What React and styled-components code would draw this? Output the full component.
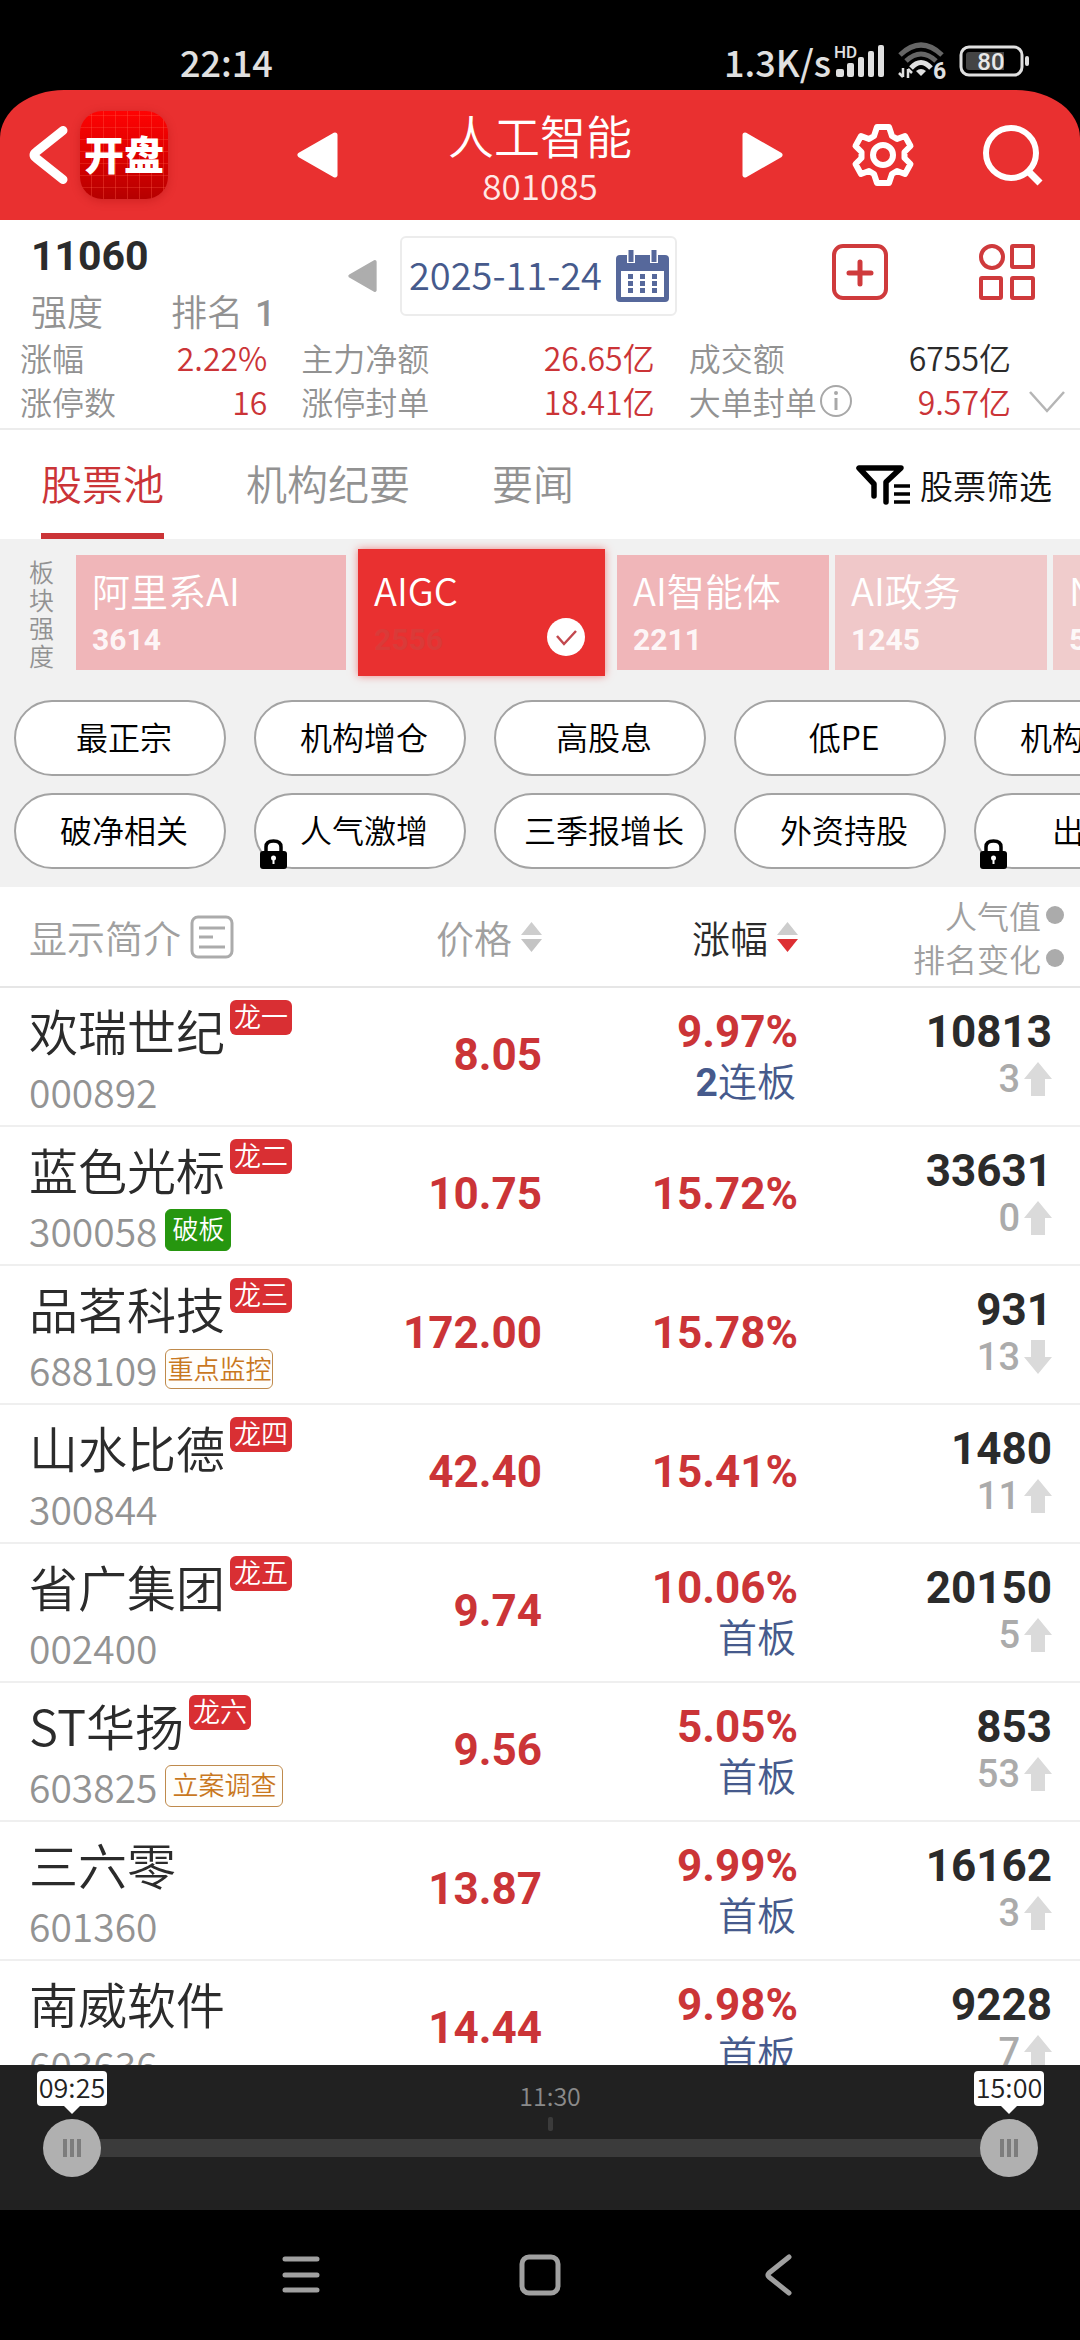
import React, { useState } from "react";
import styled, { createGlobalStyle, css } from "styled-components";

const cjk = `"Noto Sans CJK SC", sans-serif`;
const num = `Roboto, "Noto Sans CJK SC", sans-serif`;

const color = {
  brand: "#e93030",
  red: "#cb3437",
  ink: "#2b2b2b",
  gray: "#929292",
  light: "#a0a0a0",
  blue: "#465a8c",
  panel: "#f1f1f1",
};

const Global = createGlobalStyle`
  *, *::before, *::after { box-sizing: border-box; }
  html, body { margin: 0; background: #000; }
  body { font-family: ${cjk}; font-weight: 350; color: ${color.ink}; }
  button { font: inherit; color: inherit; background: none; border: 0; padding: 0; margin: 0; cursor: pointer; }
  svg { display: block; flex: none; overflow: visible; }
  dl, dd, h1, p { margin: 0; }
`;

const Screen = styled.div`
  display: flex;
  flex-direction: column;
  height: 100vh;
  overflow: hidden;
  background: #000;
  white-space: nowrap;
`;

/* Status bar */
const StatusBar = styled.div`
  display: flex;
  justify-content: space-between;
  align-items: center;
  flex: none;
  height: 90px;
  padding: 32px 51px 0 180px;
  font-size: 36px;
  font-weight: 500;
  line-height: 58px;
  color: #e0e0e0;
`;
const StatusIcons = styled.div`
  display: flex;
  align-items: center;
  gap: 13px;
`;
const Speed = styled.div`
  display: flex;
  align-items: center;
  gap: 4px;
`;

/* Header */
const Header = styled.header`
  display: grid;
  grid-template-columns: 1fr 486px 1fr;
  align-items: center;
  flex: none;
  height: 130px;
  background: ${color.brand};
  border-radius: 64px 64px 0 0 / 48px 48px 0 0;
  color: #fff;
`;
const HeaderLeft = styled.div`
  display: flex;
  align-items: center;
  gap: 12px;
  padding-left: 28px;
`;
const HeaderCenter = styled.div`
  display: flex;
  align-items: center;
  justify-content: space-between;
`;
const HeaderRight = styled.div`
  display: flex;
  align-items: center;
  justify-content: flex-end;
  gap: 68px;
  padding-right: 36px;
`;
const Logo = styled.div`
  display: flex;
  align-items: center;
  justify-content: center;
  width: 88px;
  height: 88px;
  padding-bottom: 4px;
  border-radius: 22px;
  background:
    repeating-linear-gradient(90deg, transparent 0 11px, rgba(255, 90, 70, 0.35) 11px 12px),
    repeating-linear-gradient(0deg, transparent 0 11px, rgba(255, 90, 70, 0.3) 11px 12px),
    linear-gradient(#ff0303, #de0000 50%, #b50000);
  box-shadow: 0 2px 10px rgba(150, 0, 0, 0.3);
  font-size: 40px;
  font-weight: 900;
  line-height: 48px;
`;
const Heading = styled.div`
  padding-top: 5px;
  text-align: center;
`;
const Title = styled.h1`
  font-size: 46px;
  font-weight: inherit;
  line-height: 54px;
`;
const Code = styled.p`
  font-size: 35px;
  line-height: 48px;
  color: #ffe9e6;
`;

/* Summary */
const Summary = styled.section`
  flex: none;
  padding-top: 16px;
  background: #fff;
  border-bottom: 2px solid #ececec;
`;
const SummaryTop = styled.div`
  display: flex;
  align-items: flex-start;
`;
const Score = styled.div`
  width: 348px;
  padding-left: 31px;
`;
const ScoreValue = styled.div`
  font-family: ${num};
  font-size: 41px;
  font-weight: 700;
  line-height: 40px;
`;
const ScoreMeta = styled.div`
  display: flex;
  gap: 68px;
  height: 40px;
  margin-top: 14px;
  font-size: 36px;
  line-height: 40px;
  color: ${color.gray};
`;
const Rank = styled.span`
  display: flex;
  align-items: baseline;
  gap: 12px;
  & > b {
    font-family: ${num};
    font-weight: 500;
  }
`;
const DateGroup = styled.div`
  display: flex;
  align-items: center;
  gap: 23px;
`;
const DateButton = styled.button`
  display: flex;
  align-items: center;
  justify-content: space-between;
  width: 277px;
  height: 80px;
  padding: 0 6px 0 7px;
  border: 2px solid #ececec;
  border-radius: 6px;
  color: ${color.blue};
  & > time {
    padding-bottom: 4px;
    font-size: 38px;
    line-height: 48px;
  }
`;
const Actions = styled.div`
  display: flex;
  gap: 91px;
  margin-left: auto;
  padding: 8px 45px 0 0;
`;
const StatsBar = styled.div`
  display: flex;
  align-items: flex-end;
  gap: 18px;
  padding: 5px 15px 5px 20px;
`;
const Stats = styled.div`
  display: grid;
  grid-template-columns: 247fr 353fr 322fr;
  gap: 34px;
  flex: 1;
`;
const StatRow = styled.div`
  display: flex;
  justify-content: space-between;
  font-size: 32px;
  line-height: 44px;
  & > dt {
    display: flex;
    align-items: center;
    gap: 2px;
    color: ${color.gray};
  }
  & > dd {
    color: ${(p) => (p.$plain ? color.ink : color.red)};
  }
`;
const MoreButton = styled.button`
  padding-bottom: 10px;
`;

/* Tabs */
const TabBar = styled.nav`
  display: flex;
  align-items: center;
  gap: 82px;
  flex: none;
  height: 109px;
  padding: 0 28px 0 41px;
  background: #fff;
`;
const Tab = styled.button`
  align-self: stretch;
  border-bottom: 6px solid ${(p) => (p.$active ? color.red : "transparent")};
  font-size: 41px;
  line-height: 48px;
  color: ${(p) => (p.$active ? color.red : color.gray)};
`;
const FilterButton = styled.button`
  display: flex;
  align-items: center;
  gap: 10px;
  margin-left: auto;
  font-size: 33px;
  line-height: 44px;
  color: #111;
`;

/* Sector cards and filter chips */
const Panel = styled.section`
  flex: none;
  padding: 10px 0 18px;
  background: ${color.panel};
  overflow: hidden;
`;
const SectorRow = styled.div`
  display: flex;
  align-items: center;
  gap: 6px;
  height: 127px;
`;
const SectorLabel = styled.div`
  flex: none;
  width: 70px;
  padding: 0 16px 0 29px;
  font-size: 25px;
  line-height: 28px;
  color: ${color.gray};
  white-space: normal;
  word-break: break-all;
`;
const SectorCard = styled.button`
  position: relative;
  flex: none;
  width: ${(p) => p.$width}px;
  height: 115px;
  padding: 0 16px;
  text-align: left;
  color: #fff;
  background: ${(p) => p.$tone};
  ${(p) =>
    p.$active &&
    css`
      height: 127px;
      margin: 0 6px;
      box-shadow: 0 0 8px rgba(233, 48, 48, 0.55);
    `}
`;
const SectorName = styled.span`
  display: block;
  font-size: 38px;
  line-height: 44px;
`;
const SectorValue = styled.span`
  display: block;
  margin-top: 10px;
  font-family: ${num};
  font-size: 30px;
  font-weight: 700;
  line-height: 36px;
  color: ${(p) => (p.$faded ? "#d93b39" : "rgba(255, 255, 255, 0.9)")};
`;
const CheckMark = styled.span`
  position: absolute;
  right: 20px;
  bottom: 20px;
`;
const ChipGrid = styled.div`
  display: grid;
  grid-template-columns: repeat(5, 212px);
  gap: 17px 28px;
  margin-top: 24px;
  padding-left: 14px;
`;
const Chip = styled.button`
  position: relative;
  height: 76px;
  padding: 0 0 4px 8px;
  border: 2px solid #a3a3a3;
  border-radius: 38px;
  background: #fff;
  font-size: 32px;
  line-height: 44px;
  color: #000;
`;
const LockBadge = styled.span`
  position: absolute;
  left: 4px;
  bottom: -2px;
`;

/* Stock table */
const ListArea = styled.main`
  flex: 1;
  min-height: 0;
  overflow: hidden;
  background: #fff;
`;
const Table = styled.table`
  width: 100%;
  table-layout: fixed;
  border-collapse: separate;
  border-spacing: 0;
`;
const Col = styled.col`
  width: ${(p) => p.$width};
`;
const Th = styled.th`
  height: 101px;
  padding: 0 ${(p) => p.$right || 0}px 0 ${(p) => p.$left || 0}px;
  border-bottom: 2px solid #e6e6e6;
  font-size: 38px;
  font-weight: inherit;
  line-height: 48px;
  color: ${(p) => (p.$active ? color.ink : color.light)};
`;
const HeadButton = styled.button`
  display: flex;
  align-items: center;
  gap: 9px;
  margin-left: ${(p) => (p.$end ? "auto" : 0)};
`;
const HeadLine = styled.button`
  display: flex;
  align-items: center;
  gap: 5px;
  margin-left: auto;
  font-size: 32px;
  line-height: 43px;
  &::after {
    content: "";
    width: 18px;
    height: 18px;
    border-radius: 9px;
    background: #ababab;
  }
`;
const Td = styled.td`
  height: 139px;
  padding: 0 0 4px;
  border-bottom: 2px solid #efefef;
  text-align: right;
  vertical-align: middle;
`;
const NameCell = styled(Td)`
  padding: 12px 0 0 29px;
  text-align: left;
  vertical-align: top;
`;
const LastCell = styled(Td)`
  padding-right: 28px;
`;
const NameLine = styled.div`
  display: flex;
  align-items: flex-start;
  gap: 5px;
  font-size: 49px;
  line-height: 60px;
`;
const Dragon = styled.span`
  height: 35px;
  padding: 0 4px;
  border-radius: 6px;
  background: #d92f33;
  font-size: 27px;
  line-height: 32px;
  color: #fff;
`;
const CodeLine = styled.div`
  display: flex;
  align-items: center;
  gap: 8px;
  height: 42px;
  margin-top: 10px;
  font-size: 39px;
  line-height: 42px;
  color: #939393;
`;
const Tag = styled.span`
  height: ${(p) => (p.$tight ? 40 : 42)}px;
  padding: 0 ${(p) => (p.$tight ? 1 : 6)}px;
  border: 1px solid ${(p) => (p.$solid ? "#26960f" : "#bf8a4c")};
  border-radius: 6px;
  background: ${(p) => (p.$solid ? "#26960f" : "#fffefb")};
  font-size: 26px;
  line-height: 36px;
  color: ${(p) => (p.$solid ? "#fff" : "#c9781f")};
`;
const Figure = styled.div`
  font-family: ${num};
  font-size: 44px;
  font-weight: 700;
  line-height: 48px;
  color: ${(p) => (p.$up ? color.red : color.ink)};
`;
const Boards = styled.div`
  display: flex;
  align-items: baseline;
  justify-content: flex-end;
  padding-right: 2px;
  height: 46px;
  font-size: 39px;
  line-height: 46px;
  color: ${color.blue};
  & > b {
    font-family: ${num};
    font-weight: 700;
  }
`;
const Move = styled.div`
  display: flex;
  align-items: center;
  justify-content: flex-end;
  gap: 4px;
  height: 46px;
  font-family: ${num};
  font-size: 38px;
  font-weight: 500;
  line-height: 46px;
  color: #ababab;
`;

/* Timeline */
const Timeline = styled.section`
  flex: none;
  height: 145px;
  padding: 54px 42px 0 43px;
  background: #212121;
`;
const Rail = styled.div`
  position: relative;
  display: grid;
  align-items: center;
  height: 58px;
  &::before {
    content: "";
    grid-area: 1 / 1;
    height: 18px;
    margin: 0 29px;
    background: #3b3b3b;
  }
`;
const thumb = css`
  width: 58px;
  height: 58px;
  border: 0;
  border-radius: 50%;
  background:
    linear-gradient(#7d7d7d, #7d7d7d) 20px 50% / 4px 18px no-repeat,
    linear-gradient(#7d7d7d, #7d7d7d) 27px 50% / 4px 18px no-repeat,
    linear-gradient(#7d7d7d, #7d7d7d) 34px 50% / 4px 18px no-repeat,
    #b0b0b0;
  pointer-events: auto;
`;
const Handle = styled.input`
  grid-area: 1 / 1;
  appearance: none;
  width: 100%;
  height: 58px;
  margin: 0;
  background: transparent;
  pointer-events: none;
  &::-webkit-slider-thumb {
    appearance: none;
    ${thumb}
  }
  &::-moz-range-thumb {
    ${thumb}
  }
`;
const Marks = styled.div`
  position: absolute;
  left: 29px;
  right: 29px;
  bottom: 100%;
`;
const Bubble = styled.label`
  position: absolute;
  bottom: 13px;
  width: 70px;
  height: 35px;
  margin-left: -35px;
  border-radius: 4px;
  background: #fff;
  font-size: 27px;
  line-height: 32px;
  text-align: center;
  color: #222;
  &::after {
    content: "";
    position: absolute;
    top: 100%;
    left: 27px;
    border: 8px solid transparent;
    border-top-color: #fff;
  }
`;
const Noon = styled.span`
  position: absolute;
  bottom: -12px;
  width: 70px;
  margin-left: -35px;
  font-size: 25px;
  line-height: 36px;
  text-align: center;
  color: #8a8a8a;
  &::after {
    content: "";
    display: block;
    width: 5px;
    height: 14px;
    margin: 4px auto 0;
    border-radius: 2px;
    background: #3b3b3b;
  }
`;

/* System navigation */
const SystemNav = styled.nav`
  display: flex;
  align-items: center;
  justify-content: center;
  gap: 198px;
  flex: none;
  height: 130px;
`;

const Triangle = ({ flip, w, h, fill }) => (
  <svg width={w} height={h} viewBox="0 0 41 46">
    <path
      d={flip ? "M3 3L38 23L3 43Z" : "M38 3L3 23L38 43Z"}
      fill={fill}
      stroke={fill}
      strokeWidth="5"
      strokeLinejoin="round"
    />
  </svg>
);

const BackIcon = () => (
  <svg width="40" height="60" viewBox="0 0 40 60" fill="none" stroke="#fff" strokeWidth="9" strokeLinecap="round" strokeLinejoin="round">
    <path d="M35 5.500L8 27Q4 30 8 33L35 54.500" />
  </svg>
);

const GearIcon = () => (
  <svg width="62" height="64" viewBox="0 0 62 64" fill="none" stroke="#fff" strokeWidth="6" strokeLinejoin="round">
    <path d="M25 4H37L40 13L45 16L53 13L58.500 23L52.500 29V35L58.500 41L53 51L45 48L40 51L37 60H25L22 51L17 48L9 51L3.500 41L9.500 35V29L3.500 23L9 13L17 16L22 13Z" />
    <circle cx="31" cy="32" r="10" />
  </svg>
);

const SearchIcon = () => (
  <svg width="62" height="62" viewBox="0 0 62 62" fill="none" stroke="#fff" strokeWidth="6">
    <circle cx="29" cy="29" r="25" />
    <path d="M46 47L58 59" strokeWidth="7" />
  </svg>
);

const SignalIcon = () => (
  <svg width="50" height="34" viewBox="0 0 50 34" fill="#e0e0e0">
    <text x="-1" y="14" fontFamily="Roboto, sans-serif" fontSize="17" fontWeight="500">HD</text>
    <rect x="1" y="25" width="8" height="8" rx="2" />
    <rect x="12" y="19" width="7" height="14" rx="2" />
    <rect x="23" y="13" width="6" height="20" rx="2" />
    <rect x="33" y="7" width="6" height="26" rx="2" />
    <rect x="43" y="1" width="6" height="32" rx="2" />
  </svg>
);

const WifiIcon = () => (
  <svg width="48" height="38" viewBox="0 0 48 38" fill="none" strokeWidth="5">
    <path d="M2 13Q23 -7 44 13" stroke="#666" />
    <path d="M8 19Q23 5 38 19" stroke="#666" />
    <path d="M13 26Q23 15 33 26" stroke="#e0e0e0" />
    <path d="M18 29Q23 25 28 29L23 34Z" fill="#e0e0e0" />
    <path d="M5 26V35M1 31L5 35M10 36V27M10 27L14 31" stroke="#e0e0e0" strokeWidth="2.500" />
    <text x="35" y="37" fill="#e0e0e0" fontFamily="Roboto, sans-serif" fontSize="23" fontWeight="700">6</text>
  </svg>
);

const BatteryIcon = () => (
  <svg width="70" height="32" viewBox="0 0 70 32">
    <rect x="2" y="2" width="61" height="28" rx="8" fill="none" stroke="#e0e0e0" strokeWidth="3" />
    <path d="M10 7H45V25H10Q7 25 7 22V10Q7 7 10 7Z" fill="#444" />
    <rect x="66" y="11" width="4" height="10" rx="2" fill="#e0e0e0" />
    <text x="32" y="25" textAnchor="middle" fill="#e8e8e8" fontFamily="Roboto, sans-serif" fontSize="24" fontWeight="500">80</text>
  </svg>
);

const CalendarIcon = () => (
  <svg width="53" height="52" viewBox="0 0 53 52">
    <path d="M4 5H49Q53 5 53 9V48Q53 52 49 52H4Q0 52 0 48V9Q0 5 4 5Z" fill="#56689b" />
    <rect x="5" y="21" width="43" height="26" fill="#fff" />
    <path d="M15 0V13M38 0V13" stroke="#fff" strokeWidth="8" />
    <path d="M15 0V12M38 0V12" stroke="#56689b" strokeWidth="5" />
    {[24, 31, 38].map((y) =>
      [12, 24, 36].map((x) => <rect key={`${x}-${y}`} x={x} y={y} width="5" height="5" fill="#56689b" />)
    )}
  </svg>
);

const AddIcon = () => (
  <svg width="56" height="56" viewBox="0 0 56 56" fill="none" stroke="#cf3a3c">
    <rect x="2" y="2" width="52" height="52" rx="9" strokeWidth="4" />
    <path d="M28 18V40M17 29H39" strokeWidth="5" strokeLinecap="round" />
  </svg>
);

const GridIcon = () => (
  <svg width="56" height="56" viewBox="0 0 56 56" fill="none" stroke="#cf3a3c" strokeWidth="4">
    <circle cx="13" cy="13" r="11" />
    <rect x="33" y="2" width="21" height="21" rx="1" />
    <rect x="2" y="34" width="20" height="20" rx="1" />
    <rect x="33" y="34" width="21" height="20" rx="1" />
  </svg>
);

const InfoIcon = () => (
  <svg width="34" height="34" viewBox="0 0 34 34" fill="none" stroke="#a8a8a8" strokeWidth="2">
    <circle cx="17" cy="17" r="15" />
    <path d="M17 14V26" strokeWidth="3" />
    <circle cx="17" cy="9" r="1" />
  </svg>
);

const FilterIcon = () => (
  <svg width="54" height="42" viewBox="0 0 54 42" fill="none" stroke="#000" strokeWidth="5.500" strokeLinecap="round" strokeLinejoin="round">
    <path d="M18 32V20L3 4H45L30 18V38" />
    <path d="M38 22H54M38 30H54M38 38H54" strokeWidth="3.500" strokeLinecap="butt" />
  </svg>
);

const LockIcon = () => (
  <svg width="27" height="30" viewBox="0 0 27 30">
    <path d="M6 14V8Q6 2 13.500 2Q21 2 21 8V14" fill="none" stroke="#000" strokeWidth="3.500" />
    <rect y="12" width="27" height="18" rx="3" />
    <circle cx="13.500" cy="19" r="2.500" fill="#fff" />
    <path d="M13.500 20V25" stroke="#fff" strokeWidth="2" />
  </svg>
);

const CheckIcon = () => (
  <svg width="38" height="38" viewBox="0 0 38 38">
    <circle cx="19" cy="19" r="19" fill="#fff" />
    <path d="M10 18L17 26L29 13" fill="none" stroke="#c2484e" strokeWidth="2.500" />
  </svg>
);

const NoteIcon = () => (
  <svg width="44" height="44" viewBox="0 0 44 44" fill="none" stroke="#ababab" strokeWidth="3">
    <rect x="2" y="2" width="40" height="40" rx="6" />
    <path d="M9 13H35M9 22H23M9 32H35" />
  </svg>
);

const SortIcon = ({ down }) => (
  <svg width="21" height="32" viewBox="0 0 21 32">
    <path d="M10.500 1L21 14H0Z" fill="#cdcdcd" />
    <path d="M0 18H21L10.500 31Z" fill={down ? "#dd2f33" : "#c4c4c4"} />
  </svg>
);

const ArrowIcon = ({ down }) => (
  <svg width="28" height="34" viewBox="0 0 28 34">
    <path d={down ? "M14 34L28 17H21V0H7V17H0Z" : "M14 0L28 17H21V34H7V17H0Z"} fill="#dadada" />
  </svg>
);

const stats = [
  [{ label: "涨幅", value: "2.22%" }, { label: "涨停数", value: "16" }],
  [{ label: "主力净额", value: "26.65亿" }, { label: "涨停封单", value: "18.41亿" }],
  [{ label: "成交额", value: "6755亿", plain: true }, { label: "大单封单", value: "9.57亿", info: true }],
];

const sectors = [
  { name: "阿里系AI", value: "3614", width: 270, tone: "#f0b6b9" },
  { name: "AIGC", value: "2556", width: 247, tone: color.brand, active: true },
  { name: "AI智能体", value: "2211", width: 212, tone: "#f0b6b9" },
  { name: "AI政务", value: "1245", width: 212, tone: "#f0c8c9" },
  { name: "NLP", value: "583", width: 212, tone: "#f0cccc" },
];

const chips = [
  { text: "最正宗" },
  { text: "机构增仓" },
  { text: "高股息" },
  { text: "低PE" },
  { text: "机构重仓" },
  { text: "破净相关" },
  { text: "人气激增", locked: true },
  { text: "三季报增长" },
  { text: "外资持股" },
  { text: "出海", locked: true },
];

const stocks = [
  { name: "欢瑞世纪", dragon: "龙一", code: "000892", price: "8.05", change: "9.97%", count: "2", board: "连板", heat: "10813", move: "3" },
  { name: "蓝色光标", dragon: "龙二", code: "300058", tag: { text: "破板", solid: true }, price: "10.75", change: "15.72%", heat: "33631", move: "0" },
  { name: "品茗科技", dragon: "龙三", code: "688109", tag: { text: "重点监控", tight: true }, price: "172.00", change: "15.78%", heat: "931", move: "13", down: true },
  { name: "山水比德", dragon: "龙四", code: "300844", price: "42.40", change: "15.41%", heat: "1480", move: "11" },
  { name: "省广集团", dragon: "龙五", code: "002400", price: "9.74", change: "10.06%", board: "首板", heat: "20150", move: "5" },
  { name: "ST华扬", dragon: "龙六", code: "603825", tag: { text: "立案调查" }, price: "9.56", change: "5.05%", board: "首板", heat: "853", move: "53" },
  { name: "三六零", code: "601360", price: "13.87", change: "9.99%", board: "首板", heat: "16162", move: "3" },
  { name: "南威软件", code: "603636", price: "14.44", change: "9.98%", board: "首板", heat: "9228", move: "7" },
];

/* Minutes of trading from 09:25 to 15:00, with the noon break left out */
const SESSION = 245;
const MORNING = 125;
const clock = (minute) => {
  const total = minute <= MORNING ? 565 + minute : 780 + minute - MORNING;
  return `${String(Math.floor(total / 60)).padStart(2, "0")}:${String(total % 60).padStart(2, "0")}`;
};
const place = (minute) => ({ left: `${(minute / SESSION) * 100}%` });

function StockRow({ stock }) {
  return (
    <tr>
      <NameCell>
        <NameLine>
          {stock.name}
          {stock.dragon && <Dragon>{stock.dragon}</Dragon>}
        </NameLine>
        <CodeLine>
          {stock.code}
          {stock.tag && (
            <Tag $solid={stock.tag.solid} $tight={stock.tag.tight}>
              {stock.tag.text}
            </Tag>
          )}
        </CodeLine>
      </NameCell>
      <Td>
        <Figure $up>{stock.price}</Figure>
      </Td>
      <Td>
        <Figure $up>{stock.change}</Figure>
        {stock.board && (
          <Boards>
            {stock.count && <b>{stock.count}</b>}
            {stock.board}
          </Boards>
        )}
      </Td>
      <LastCell>
        <Figure>{stock.heat}</Figure>
        <Move>
          {stock.move}
          <ArrowIcon down={stock.down} />
        </Move>
      </LastCell>
    </tr>
  );
}

export default function App() {
  const [start, setStart] = useState(0);
  const [end, setEnd] = useState(SESSION);

  return (
    <Screen>
      <Global />
      <StatusBar>
        <span>22:14</span>
        <StatusIcons>
          <Speed>
            <span>1.3K/s</span>
            <SignalIcon />
          </Speed>
          <WifiIcon />
          <BatteryIcon />
        </StatusIcons>
      </StatusBar>

      <Header>
        <HeaderLeft>
          <button type="button" aria-label="返回"><BackIcon /></button>
          <Logo>开盘</Logo>
        </HeaderLeft>
        <HeaderCenter>
          <button type="button" aria-label="上一个"><Triangle w={41} h={46} fill="#fff" /></button>
          <Heading>
            <Title>人工智能</Title>
            <Code>801085</Code>
          </Heading>
          <button type="button" aria-label="下一个"><Triangle flip w={41} h={46} fill="#fff" /></button>
        </HeaderCenter>
        <HeaderRight>
          <button type="button" aria-label="设置"><GearIcon /></button>
          <button type="button" aria-label="搜索"><SearchIcon /></button>
        </HeaderRight>
      </Header>

      <Summary>
        <SummaryTop>
          <Score>
            <ScoreValue>11060</ScoreValue>
            <ScoreMeta>
              <span>强度</span>
              <Rank>排名<b>1</b></Rank>
            </ScoreMeta>
          </Score>
          <DateGroup>
            <button type="button" aria-label="前一天"><Triangle w={29} h={38} fill="#adadad" /></button>
            <DateButton type="button">
              <time dateTime="2025-11-24">2025-11-24</time>
              <CalendarIcon />
            </DateButton>
          </DateGroup>
          <Actions>
            <button type="button" aria-label="添加"><AddIcon /></button>
            <button type="button" aria-label="更多"><GridIcon /></button>
          </Actions>
        </SummaryTop>
        <StatsBar>
          <Stats>
            {stats.map((column) => (
              <dl key={column[0].label}>
                {column.map((s) => (
                  <StatRow key={s.label} $plain={s.plain}>
                    <dt>
                      {s.label}
                      {s.info && <InfoIcon />}
                    </dt>
                    <dd>{s.value}</dd>
                  </StatRow>
                ))}
              </dl>
            ))}
          </Stats>
          <MoreButton type="button" aria-label="展开">
            <svg width="36" height="22" viewBox="0 0 36 22" fill="none" stroke="#b5b5b5" strokeWidth="2.500">
              <path d="M1 1L18 20L35 1" />
            </svg>
          </MoreButton>
        </StatsBar>
      </Summary>

      <TabBar>
        <Tab type="button" $active>股票池</Tab>
        <Tab type="button">机构纪要</Tab>
        <Tab type="button">要闻</Tab>
        <FilterButton type="button">
          <FilterIcon />
          股票筛选
        </FilterButton>
      </TabBar>

      <Panel>
        <SectorRow>
          <SectorLabel>板块强度</SectorLabel>
          {sectors.map((s) => (
            <SectorCard key={s.name} type="button" $width={s.width} $tone={s.tone} $active={s.active}>
              <SectorName>{s.name}</SectorName>
              <SectorValue $faded={s.active}>{s.value}</SectorValue>
              {s.active && <CheckMark><CheckIcon /></CheckMark>}
            </SectorCard>
          ))}
        </SectorRow>
        <ChipGrid>
          {chips.map((c) => (
            <Chip key={c.text} type="button">
              {c.text}
              {c.locked && <LockBadge><LockIcon /></LockBadge>}
            </Chip>
          ))}
        </ChipGrid>
      </Panel>

      <ListArea>
        <Table>
          <colgroup>
            <Col $width="auto" />
            <Col $width="212px" />
            <Col $width="256px" />
            <Col $width="282px" />
          </colgroup>
          <thead>
            <tr>
              <Th $left={29}>
                <HeadButton type="button">显示简介<NoteIcon /></HeadButton>
              </Th>
              <Th>
                <HeadButton type="button" $end>价格<SortIcon /></HeadButton>
              </Th>
              <Th $active>
                <HeadButton type="button" $end>涨幅<SortIcon down /></HeadButton>
              </Th>
              <Th $right={16}>
                <HeadLine type="button">人气值</HeadLine>
                <HeadLine type="button">排名变化</HeadLine>
              </Th>
            </tr>
          </thead>
          <tbody>
            {stocks.map((s) => (
              <StockRow key={s.code} stock={s} />
            ))}
          </tbody>
        </Table>
      </ListArea>

      <Timeline>
        <Rail>
          <Handle
            id="start"
            type="range"
            min="0"
            max={SESSION}
            value={start}
            onChange={(e) => setStart(Math.min(Number(e.target.value), end))}
          />
          <Handle
            id="end"
            type="range"
            min="0"
            max={SESSION}
            value={end}
            onChange={(e) => setEnd(Math.max(Number(e.target.value), start))}
          />
          <Marks>
            <Bubble htmlFor="start" style={place(start)}>{clock(start)}</Bubble>
            <Noon style={place(MORNING)}>11:30</Noon>
            <Bubble htmlFor="end" style={place(end)}>{clock(end)}</Bubble>
          </Marks>
        </Rail>
      </Timeline>

      <SystemNav>
        <button type="button" aria-label="最近任务">
          <svg width="40" height="42" viewBox="0 0 40 42" stroke="#a0a0a0" strokeWidth="5" strokeLinecap="round">
            <path d="M4 5H36M4 21H36M4 36H36" />
          </svg>
        </button>
        <button type="button" aria-label="主屏幕">
          <svg width="42" height="42" viewBox="0 0 42 42" fill="none" stroke="#a0a0a0" strokeWidth="5">
            <rect x="3" y="3" width="36" height="36" rx="7" />
          </svg>
        </button>
        <button type="button" aria-label="后退">
          <svg width="40" height="42" viewBox="0 0 40 42" fill="none" stroke="#a0a0a0" strokeWidth="5" strokeLinecap="round" strokeLinejoin="round">
            <path d="M30 3L10 19Q8 21 10 23L30 39" />
          </svg>
        </button>
      </SystemNav>
    </Screen>
  );
}
